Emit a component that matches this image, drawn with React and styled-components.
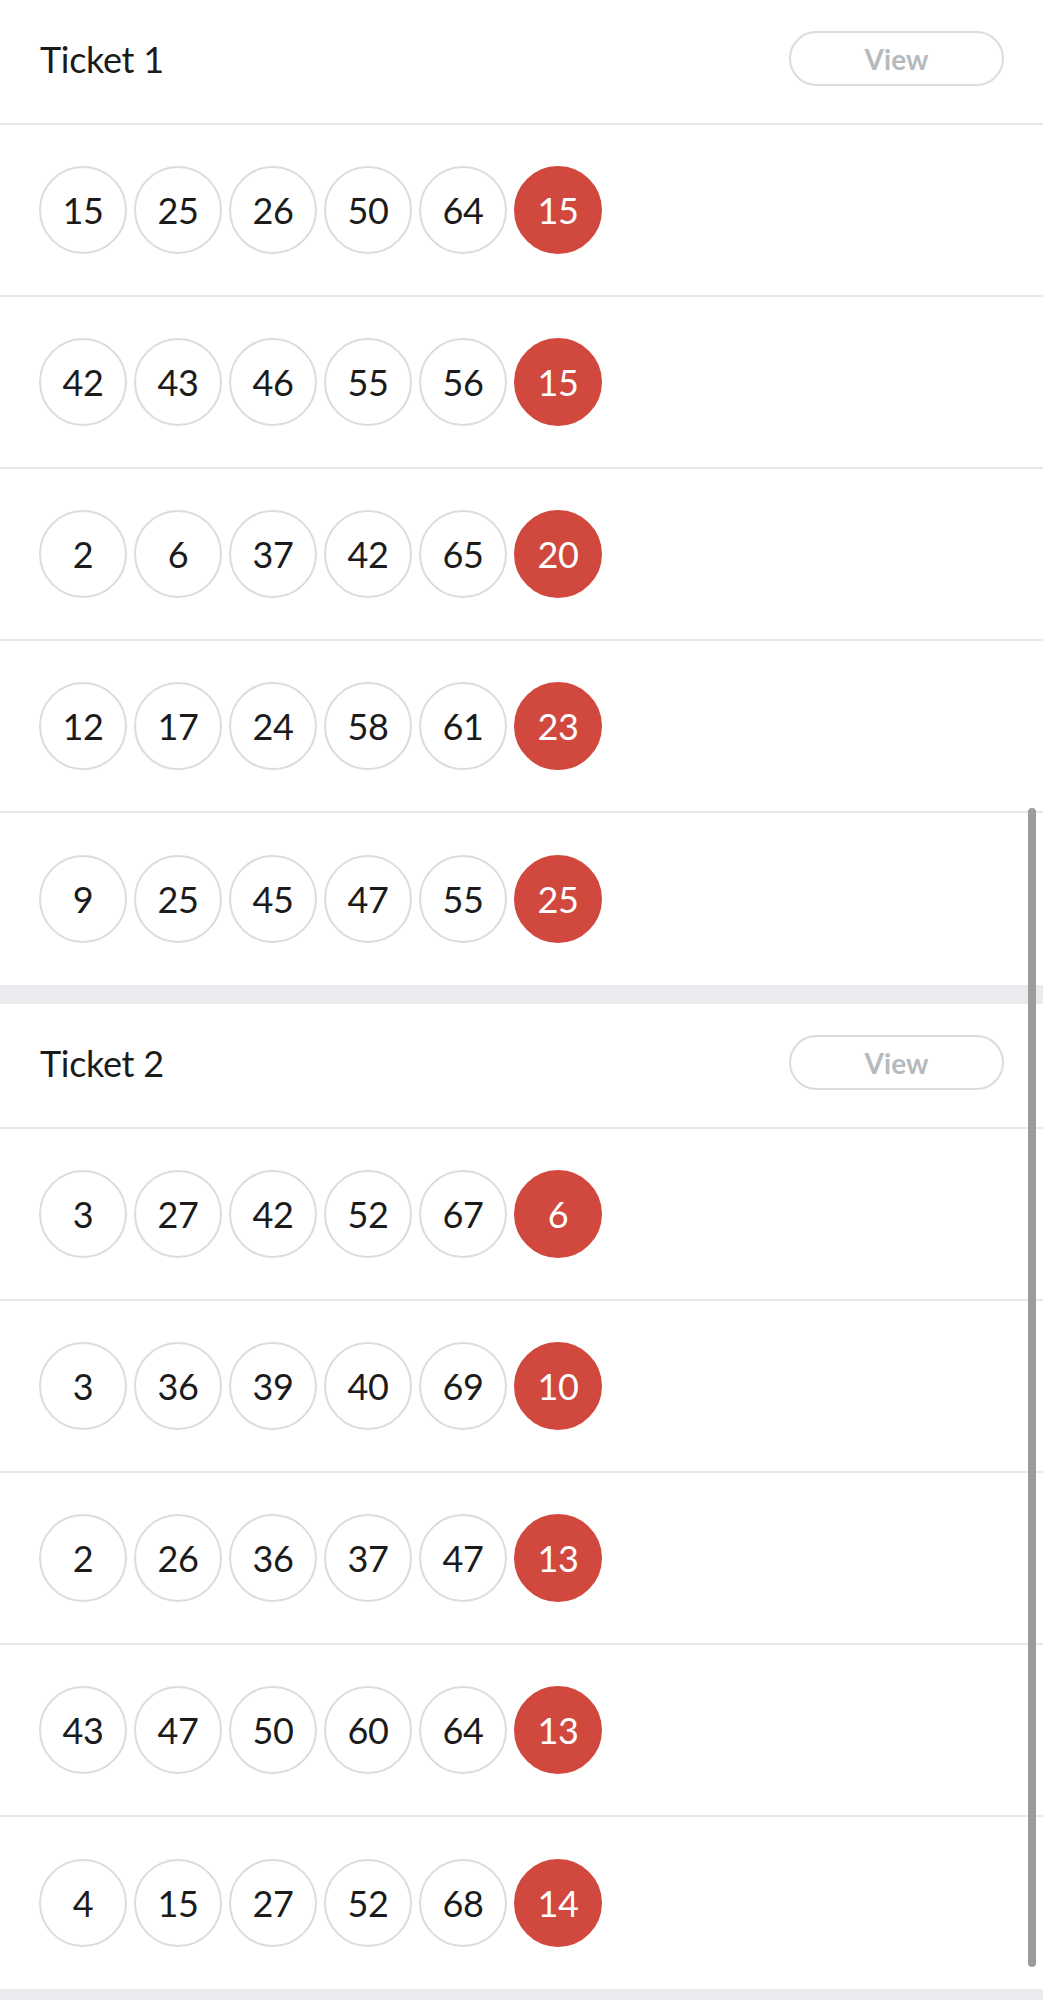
import React from "react";
import styled, { createGlobalStyle } from "styled-components";

const tickets = [
  {
    name: "Ticket 1",
    lines: [
      [15, 25, 26, 50, 64, 15],
      [42, 43, 46, 55, 56, 15],
      [2, 6, 37, 42, 65, 20],
      [12, 17, 24, 58, 61, 23],
      [9, 25, 45, 47, 55, 25],
    ],
  },
  {
    name: "Ticket 2",
    lines: [
      [3, 27, 42, 52, 67, 6],
      [3, 36, 39, 40, 69, 10],
      [2, 26, 36, 37, 47, 13],
      [43, 47, 50, 60, 64, 13],
      [4, 15, 27, 52, 68, 14],
    ],
  },
];

const GlobalStyle = createGlobalStyle`
  body {
    margin: 0;
    background: #e9ebee;
    font-family: Lato, "Open Sans", sans-serif;
    color: #1b1b1b;
  }
`;

const Page = styled.div`
  position: relative;
  display: flex;
  flex-direction: column;
  gap: 19px;
`;

const Card = styled.section`
  background: #fff;
`;

const Header = styled.header`
  height: 125px;
  box-sizing: border-box;
  border-bottom: 2px solid #e6e8ea;
  padding: 0 39px 6px 40px;
  display: flex;
  align-items: center;
  justify-content: space-between;
`;

const Title = styled.h2`
  margin: 0;
  font-size: 36px;
  font-weight: 400;
  letter-spacing: -0.3px;
`;

const ViewButton = styled.button`
  width: 215px;
  height: 55px;
  border: 2px solid #dadcde;
  border-radius: 28px;
  background: #fff;
  color: #b6babd;
  font-family: Lato, sans-serif;
  font-size: 28px;
  font-weight: 700;
  cursor: pointer;
`;

const Row = styled.div`
  height: 172px;
  box-sizing: border-box;
  padding-left: 39px;
  display: flex;
  align-items: center;
  gap: 7px;
  border-bottom: 2px solid #e6e8ea;

  &:last-child {
    border-bottom: none;
  }
`;

const Ball = styled.div`
  width: 88px;
  height: 88px;
  box-sizing: border-box;
  border-radius: 50%;
  display: flex;
  align-items: center;
  justify-content: center;
  font-size: 36px;
  font-weight: 400;
  letter-spacing: -0.5px;
  border: 2px solid ${(p) => (p.$power ? "#d0483e" : "#dadcde")};
  background: ${(p) => (p.$power ? "#d0483e" : "#fff")};
  color: ${(p) => (p.$power ? "#fff" : "#1b1b1b")};
`;

const ScrollThumb = styled.div`
  position: absolute;
  top: 808px;
  right: 7px;
  width: 8px;
  height: 1159px;
  border-radius: 4px;
  background: #9c9c9c;
`;

export default function App() {
  return (
    <>
      <GlobalStyle />
      <Page>
        {tickets.map((t) => (
          <Card key={t.name}>
            <Header>
              <Title>{t.name}</Title>
              <ViewButton>View</ViewButton>
            </Header>
            {t.lines.map((line, i) => (
              <Row key={i}>
                {line.map((n, j) => (
                  <Ball key={j} $power={j === line.length - 1}>
                    {n}
                  </Ball>
                ))}
              </Row>
            ))}
          </Card>
        ))}
        <ScrollThumb />
      </Page>
    </>
  );
}
